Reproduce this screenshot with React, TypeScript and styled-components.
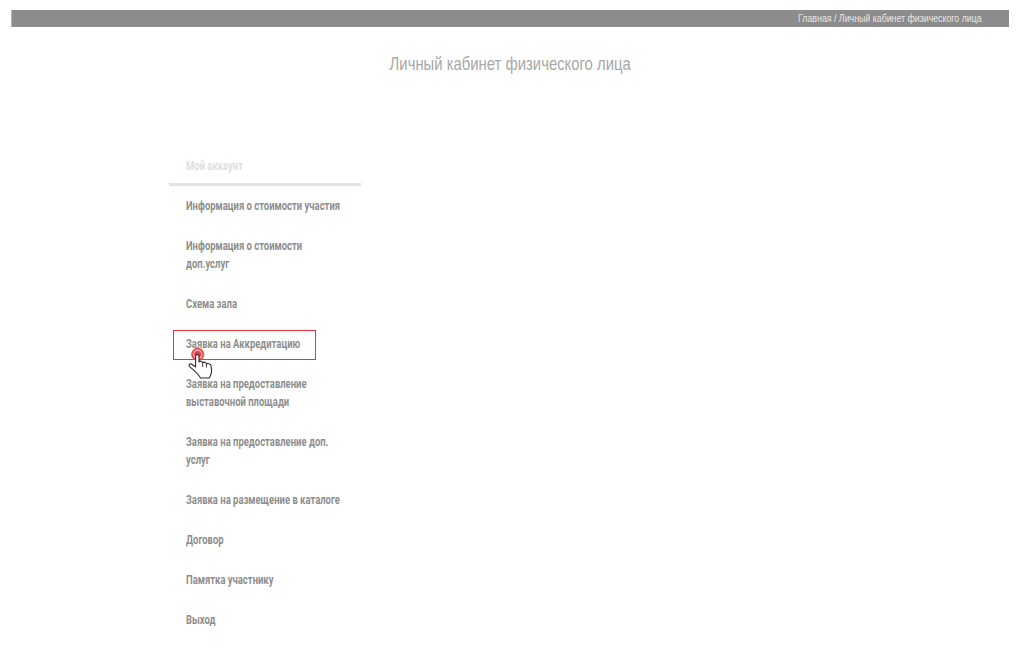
import React from "react";
import styled, { createGlobalStyle } from "styled-components";

const GlobalStyle = createGlobalStyle`
  html, body {
    margin: 0;
    padding: 0;
    background: #fff;
    font-family: Roboto, "Liberation Sans", sans-serif;
  }
`;

const Page = styled.div`
  width: 1024px;
  height: 657px;
  overflow: hidden;
  padding-top: 10px;
  box-sizing: border-box;
`;

const Breadcrumbs = styled.div`
  margin: 0 15px 0 11px;
  height: 17px;
  background: #8c8c8c;
  border-left: 1px solid #b5b5b5;
  box-sizing: border-box;
  display: flex;
  align-items: center;
  justify-content: flex-end;
  padding-right: 27px;
  color: #e6e6e6;
  font-family: "Liberation Sans", Arial, sans-serif;
  font-size: 10px;
  white-space: nowrap;
`;

const CrumbText = styled.span`
  display: inline-block;
  transform: scaleX(0.88);
  transform-origin: right;
`;

const Title = styled.h1`
  margin: 26px 0 0;
  height: 22px;
  display: flex;
  justify-content: center;
  padding-right: 4px;
  color: #a8a8a8;
  font-family: "Liberation Sans", Arial, sans-serif;
  font-size: 19px;
  line-height: 22px;
  font-weight: 400;
  white-space: nowrap;
`;

const Condensed = styled.span`
  display: inline-block;
  transform: scaleX(0.782);
  transform-origin: center;
`;

const Sidebar = styled.nav`
  width: 192px;
  margin: 82px 0 0 169px;
`;

const SideHeader = styled.div`
  height: 26px;
  padding-left: 17px;
  border-bottom: 3px solid #e2e2e2;
  color: #e0e0e0;
  font-size: 12.5px;
  font-weight: 700;
  line-height: 18px;
`;

const MenuList = styled.ul`
  list-style: none;
  margin: 0;
  padding: 0;
`;

const MenuItem = styled.li`
  position: relative;
  padding: 11px 0 11px 17px;
  color: #8e8e8e;
  font-size: 12.5px;
  font-weight: 700;
  line-height: 18px;
`;

const ItemText = styled.span`
  display: inline-block;
  transform: scaleX(0.757);
  transform-origin: left;
  white-space: nowrap;
`;

const Highlight = styled.span`
  position: absolute;
  left: 4px;
  top: 6px;
  width: 143px;
  height: 30px;
  box-sizing: border-box;
  border: 1px solid #e8343c;
`;

const Pointer = styled.svg`
  position: absolute;
  left: 18px;
  top: 23px;
  width: 26px;
  height: 32px;
`;

const items: { lines: string[]; active?: boolean }[] = [
  { lines: ["Информация о стоимости участия"] },
  { lines: ["Информация о стоимости", "доп.услуг"] },
  { lines: ["Схема зала"] },
  { lines: ["Заявка на Аккредитацию"], active: true },
  { lines: ["Заявка на предоставление", "выставочной площади"] },
  { lines: ["Заявка на предоставление доп.", "услуг"] },
  { lines: ["Заявка на размещение в каталоге"] },
  { lines: ["Договор"] },
  { lines: ["Памятка участнику"] },
  { lines: ["Выход"] },
];

const HandCursor = () => (
  <Pointer viewBox="0 0 26 32">
    <circle cx="10.7" cy="7.3" r="6.5" fill="#f0454c" />
    <circle cx="10.7" cy="7.3" r="4.8" fill="#f9b4b6" />
    <circle cx="10.7" cy="7.3" r="3.4" fill="#ee3b42" />
    <path
      d="M8.6 9 C8.6 7.2 12 7.2 12 9 L12 15 C13 13.6 15.4 14 15.7 15.8 C16.8 14.6 19.2 15.2 19.4 17 C20.6 16 23.4 16.6 24 18.5 L24.6 24 C24.6 27 23.2 29 22.4 31 L13.5 31 C11.5 27.5 7.5 23.5 2.5 19.6 C1.2 18.2 3.2 16.2 4.8 17.2 L8.6 20 Z"
      fill="#fff"
      stroke="#2e2e2e"
      strokeWidth="1.1"
      strokeLinejoin="round"
    />
    <path d="M15.7 15.8 V20 M19.4 17 V20.5" stroke="#2e2e2e" strokeWidth="0.9" fill="none" />
  </Pointer>
);

export default function App() {
  return (
    <Page>
      <GlobalStyle />
      <Breadcrumbs>
        <CrumbText>Главная / Личный кабинет физического лица</CrumbText>
      </Breadcrumbs>
      <Title>
        <Condensed>Личный кабинет физического лица</Condensed>
      </Title>
      <Sidebar>
        <SideHeader>
          <ItemText>Мой аккаунт</ItemText>
        </SideHeader>
        <MenuList>
          {items.map((item) => (
            <MenuItem key={item.lines[0]}>
              {item.lines.map((line) => (
                <div key={line}>
                  <ItemText>{line}</ItemText>
                </div>
              ))}
              {item.active && <Highlight />}
              {item.active && <HandCursor />}
            </MenuItem>
          ))}
        </MenuList>
      </Sidebar>
    </Page>
  );
}
